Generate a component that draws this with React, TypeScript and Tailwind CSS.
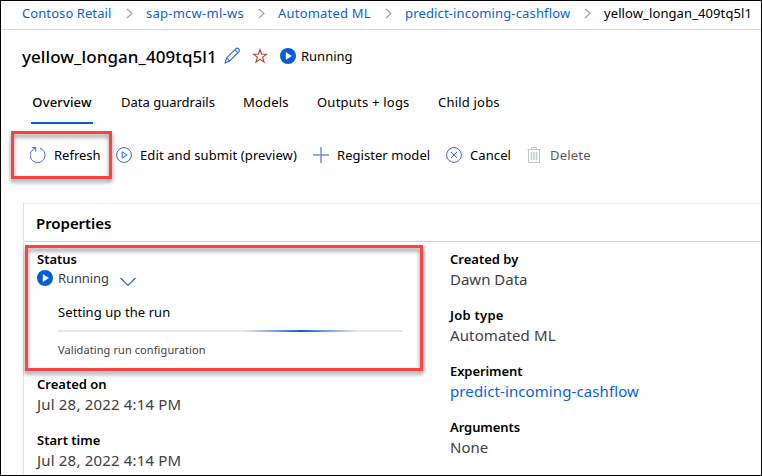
import type { ReactNode } from "react";

function Crumb({ width, tracking, children }: { width: string; tracking: string; children: string }) {
  return (
    <div className={`flex shrink-0 items-center justify-between ${width}`}>
      <a className={`text-[#0a5fdc] ${tracking}`}>{children}</a>
      <svg width="7" height="11" viewBox="0 0 7 11" fill="none" stroke="#a0a0a0" strokeWidth="1.1" className="mr-[13px]">
        <path d="M1 1l5 4.5L1 10" />
      </svg>
    </div>
  );
}

function RunningIcon() {
  return (
    <svg width="16" height="16" viewBox="0 0 16 16" className="shrink-0">
      <circle cx="8" cy="8" r="8" fill="#015cda" />
      <path d="M6 4.4v7.2L11.5 8z" fill="#fff" stroke="#fff" strokeWidth="0.5" strokeLinejoin="round" />
    </svg>
  );
}

function Icon({ children, color = "#2f66de" }: { children: ReactNode; color?: string }) {
  return (
    <svg width="16" height="16" viewBox="0 0 16 16" fill="none" stroke={color} className="shrink-0">
      {children}
    </svg>
  );
}

function Tool({ width, icon, tracking, children }: { width: string; icon: ReactNode; tracking: string; children: string }) {
  return (
    <button className={`flex shrink-0 items-center gap-2 ${width}`}>
      {icon}
      <span className={tracking}>{children}</span>
    </button>
  );
}

function Field({ label, value, labelTracking = "", valueTracking = "", color = "text-[#404040]" }: {
  label: string; value: string; labelTracking?: string; valueTracking?: string; color?: string;
}) {
  return (
    <div className="leading-5">
      <div className={`text-[13px] font-semibold ${labelTracking}`}>{label}</div>
      <div className={`text-[15px] ${valueTracking} ${color}`}>{value}</div>
    </div>
  );
}

export default function App() {
  return (
    <div className="relative h-[476px] w-[762px] overflow-hidden border border-black bg-white font-['Noto_Sans',sans-serif] text-[13px] leading-5 whitespace-nowrap text-black">
      <nav className="flex h-[29px] items-center border-b border-[#d6d6d6] pb-1 pl-[21px]">
        <Crumb width="w-[124px]" tracking="tracking-[0.08px]">Contoso Retail</Crumb>
        <Crumb width="w-[132px]" tracking="tracking-[0.25px]">sap-mcw-ml-ws</Crumb>
        <Crumb width="w-[127px]" tracking="tracking-[0.2px]">Automated ML</Crumb>
        <Crumb width="w-[199px]" tracking="tracking-[0.15px]">predict-incoming-cashflow</Crumb>
        <span className="tracking-[0.1px]">yellow_longan_409tq5l1</span>
      </nav>

      <header className="flex h-[54px] items-center pl-[21px]">
        <h1 className="w-[202px] text-[17px] font-medium tracking-[0.07px]">yellow_longan_409tq5l1</h1>
        <svg width="17" height="17" viewBox="0 0 17 17" fill="none" stroke="#2b66d9" strokeWidth="1.1" className="-mt-1">
          <path d="M1.2 15.8l1.2-4.6L12 1.6q1.2-1 2.6.3t.4 2.7l-9.700 9.700zM2.400 11.200q2.400.4 2.900 3.100M10.800 2.900l3.100 3" />
        </svg>
        <svg width="16" height="16" viewBox="0 0 16 16" fill="none" stroke="#b5452c" strokeWidth="1.1" className="ml-[11px] -mt-[3px]">
          <path d="M8 1.500l1.600 4.700h5L10.600 9.200l1.500 4.900L8 11.200l-4.100 2.900 1.500-4.900L1.400 6.200h5z" />
        </svg>
        <div className="-mt-0.5 ml-3 flex items-center gap-[5px]">
          <RunningIcon />
          <span>Running</span>
        </div>
      </header>

      <nav className="flex h-10 pl-[30px]">
        <div className="mr-[27px] flex h-10 w-[62px] items-center justify-center border-b-2 border-[#015cda] pb-0.5 font-medium tracking-[0.15px]">Overview</div>
        <div className="ml-px w-[122px] pt-2">Data guardrails</div>
        <div className="w-[74px] pt-2 tracking-[0.2px]">Models</div>
        <div className="w-[121px] pt-2 tracking-[0.22px]">Outputs + logs</div>
        <div className="pt-2 tracking-[0.2px]">Child jobs</div>
      </nav>

      <div className="flex h-[62px] items-center pl-[29px]">
        <Tool width="w-[86px]" tracking="tracking-[0px]" icon={
          <Icon><path d="M10.200 1.300A7.400 7.400 0 1 1 5.300 1.200M1.800 .6h4v4" /></Icon>
        }>Refresh</Tool>
        <Tool width="w-[197px]" tracking="tracking-[0.1px]" icon={
          <Icon><circle cx="8" cy="8" r="7.400" /><path d="M6.200 4.800v6.400L11.200 8z" /></Icon>
        }>Edit and submit (preview)</Tool>
        <Tool width="w-[133px]" tracking="tracking-[0.05px]" icon={
          <Icon color="#6f8fe6"><path d="M8 0v16M0 8h16" strokeWidth="1.500" /></Icon>
        }>Register model</Tool>
        <Tool width="w-20" tracking="tracking-[0.1px]" icon={
          <Icon><circle cx="8" cy="8" r="7.400" /><path d="M5 5l6 6M11 5l-6 6" /></Icon>
        }>Cancel</Tool>
        <Tool width="w-20" tracking="tracking-[0.2px] text-[#5c5c5c]" icon={
          <Icon color="#c4c4c4">
            <path d="M1.500 2.500h13M5.500 2.500v-2h5v2M2.500 2.500v13h11v-13" />
            <path d="M5.500 5v8M8 5v8M10.500 5v8" stroke="#bccbe0" strokeWidth="1.500" />
          </Icon>
        }>Delete</Tool>
      </div>

      <section className="mt-[17px] ml-[22px] h-[300px] border-l border-[#e0e0e0]">
        <h2 className="flex h-[39px] items-center border-t border-b border-t-[#f0f0f0] border-b-[#d4d4d4] pl-[12px] text-[15px] font-semibold tracking-[-0.05px]">Properties</h2>
        <div className="flex pt-[7px] pl-[13px]">
          <div className="w-[413px]">
            <div className="font-semibold">Status</div>
            <div className="-mt-px flex h-5 items-center text-[#404040]">
              <RunningIcon />
              <span className="ml-[5px] tracking-[-0.1px]">Running</span>
              <svg width="16" height="10" viewBox="0 0 16 10" fill="none" stroke="#2b66d9" strokeWidth="1.200" className="mt-2 ml-[11px]">
                <path d="M.5 1L8 8.500 15.500 1" />
              </svg>
            </div>
            <div className="mt-3.5 ml-[21px] w-[345px]">
              <div className="tracking-[0.08px]">Setting up the run</div>
              <div className="mt-2 h-0.5 bg-[#e8e8e8]">
                <div className="ml-[186px] h-0.5 w-[114px] bg-linear-to-r from-[#e8e8e8] via-[#015cda] to-[#e8e8e8]" />
              </div>
              <div className="mt-2 text-[11px] tracking-[0.09px] text-[#404040]">Validating run configuration</div>
            </div>
            <div className="mt-3.5 flex flex-col gap-4">
              <Field label="Created on" value="Jul 28, 2022 4:14 PM" valueTracking="tracking-[0.18px]" />
              <Field label="Start time" value="Jul 28, 2022 4:14 PM" valueTracking="tracking-[0.18px]" />
            </div>
          </div>
          <div className="flex flex-col gap-4">
            <Field label="Created by" value="Dawn Data" />
            <Field label="Job type" value="Automated ML" labelTracking="tracking-[0.25px]" valueTracking="tracking-[0.12px]" />
            <Field label="Experiment" value="predict-incoming-cashflow" labelTracking="tracking-[-0.08px]" valueTracking="tracking-[0.1px]" color="text-[#0a5fdc]" />
            <Field label="Arguments" value="None" labelTracking="tracking-[-0.08px]" />
          </div>
        </div>
      </section>

      <div className="absolute top-[130px] left-[10px] h-[48px] w-[101px] border-3 border-[#fb4141] [filter:drop-shadow(0_3px_2px_rgba(0,0,0,0.45))]" />
      <div className="absolute top-[244px] left-[24px] h-[126px] w-[398px] border-3 border-[#fb4141] [filter:drop-shadow(0_3px_2px_rgba(0,0,0,0.45))]" />
    </div>
  );
}
